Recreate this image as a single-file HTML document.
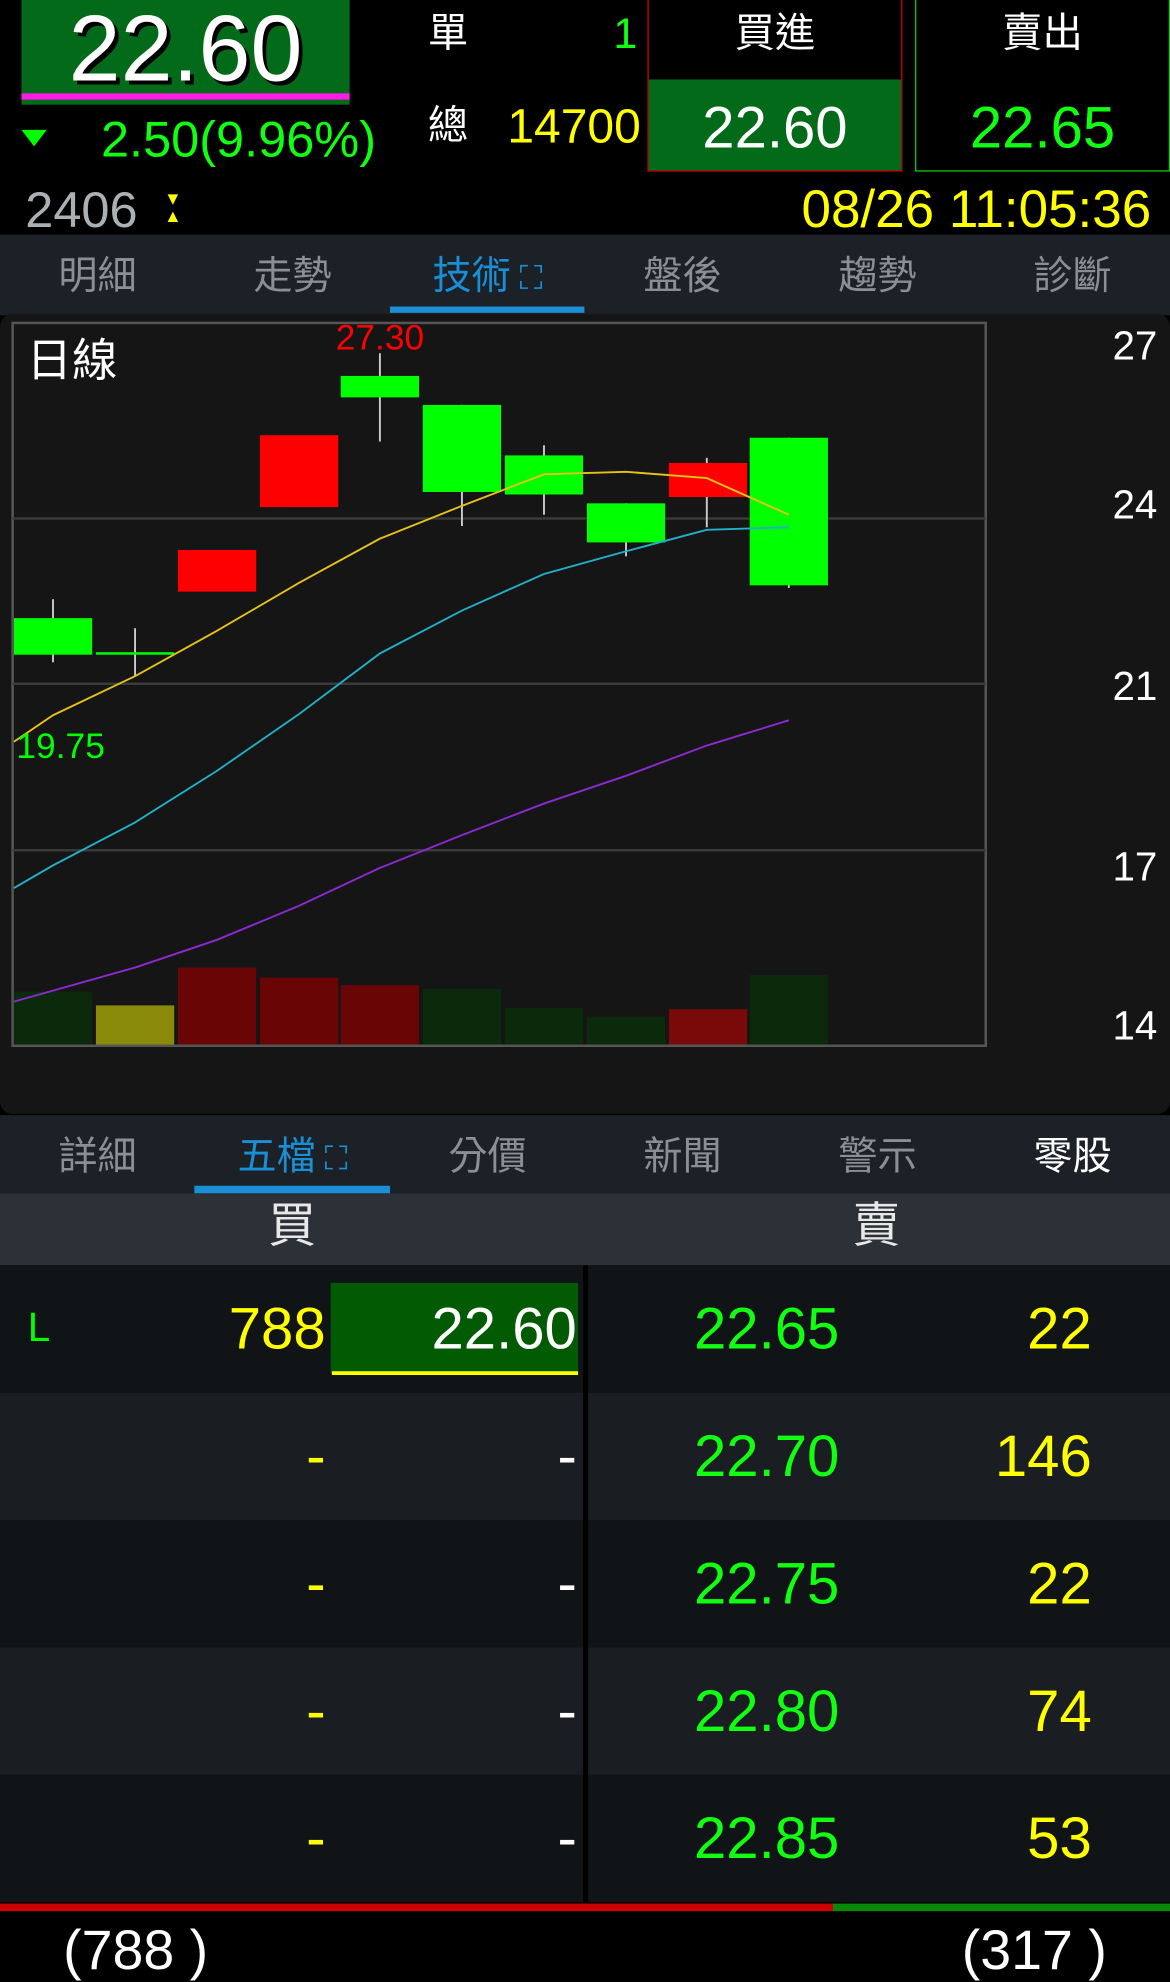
<!DOCTYPE html>
<html><head><meta charset="utf-8"><style>
html,body{margin:0;padding:0;background:#000;width:1170px;height:1978px;overflow:hidden}
#w{position:absolute;left:0;top:0;width:927px;height:1568px;transform:scale(1.26214,1.26148);transform-origin:0 0;font-family:"Liberation Sans Narrow","Liberation Sans","Noto Sans CJK TC",sans-serif}
.a{position:absolute;white-space:nowrap;line-height:1}
.cj{font-family:"Liberation Sans","Noto Sans CJK TC",sans-serif}
.tab{position:absolute;width:154.5px;text-align:center;font-size:31px;color:#8a8f94;font-family:"Noto Sans CJK TC",sans-serif;line-height:1}
.row{position:absolute;left:0;width:927px;height:101px}
.n{position:absolute;font-size:46px;line-height:1;text-align:right}
</style></head><body><div id="w">
<!-- top -->
<div class="a" style="left:17px;top:0;width:260px;height:83px;background:#036a1a"></div>
<div class="a" style="left:17px;top:74px;width:260px;height:5px;background:#ff1ae6"></div>
<div class="a" style="left:17px;top:2px;width:260px;text-align:center;font-size:74px;color:#fff;text-shadow:3px 3px 0 #000">22.60</div>
<div class="a" style="left:17px;top:103px;width:0;height:0;border-left:10px solid transparent;border-right:10px solid transparent;border-top:13px solid #0f0"></div>
<div class="a" style="left:80px;top:91px;font-size:40px;color:#1f1">2.50(9.96%)</div>
<div class="a cj" style="left:339px;top:10px;font-size:32px;color:#fff">單</div>
<div class="a" style="left:486px;top:10px;font-size:34px;color:#1f1">1</div>
<div class="a cj" style="left:339px;top:83px;font-size:32px;color:#fff">總</div>
<div class="a" style="left:402px;top:82px;font-size:38px;color:#ff0">14700</div>
<div class="a" style="left:513px;top:0;width:200px;height:135px;border:1px solid #d00;border-top:none"></div>
<div class="a" style="left:514px;top:63px;width:200px;height:72px;background:#036a1a"></div>
<div class="a cj" style="left:513px;top:10px;width:202px;text-align:center;font-size:32px;color:#fff">買進</div>
<div class="a" style="left:513px;top:78px;width:202px;text-align:center;font-size:46px;color:#fff">22.60</div>
<div class="a" style="left:725px;top:0;width:200px;height:135px;border:1px solid #1c1;border-top:none"></div>
<div class="a cj" style="left:725px;top:10px;width:202px;text-align:center;font-size:32px;color:#fff">賣出</div>
<div class="a" style="left:725px;top:78px;width:202px;text-align:center;font-size:46px;color:#1f1">22.65</div>
<div class="a" style="left:20px;top:147px;font-size:40px;color:#aab0b4">2406</div>
<div class="a" style="left:130px;top:150px;font-size:14px;color:#ff0;line-height:14px">▼<br>▲</div>
<div class="a" style="left:635px;top:145px;font-size:42px;color:#ff0">08/26 11:05:36</div>
<!-- tabs 1 -->
<div class="a" style="left:0;top:186px;width:927px;height:64px;background:#1b2126"></div>
<div class="tab" style="left:0;top:200px">明細</div>
<div class="tab" style="left:154.5px;top:200px">走勢</div>
<div class="tab" style="left:309px;top:200px;color:#1a8fd6">技術 <span style="font-size:26px">⛶</span></div>
<div class="tab" style="left:463.5px;top:200px">盤後</div>
<div class="tab" style="left:618px;top:200px">趨勢</div>
<div class="tab" style="left:772.5px;top:200px">診斷</div>
<div class="a" style="left:309px;top:243px;width:154px;height:5px;background:#1a8fd6"></div>
<!-- chart -->
<div class="a" style="left:0;top:249px;width:927px;height:634px;background:#151515;border-radius:10px"></div>
<svg class="a" style="left:0;top:0" width="927" height="900" viewBox="0 0 927 900">
<rect x="10" y="256" width="771" height="573" fill="none" stroke="#555" stroke-width="2"/>
<g stroke="#3a3a3a" stroke-width="2"><line x1="10" y1="411" x2="781" y2="411"/><line x1="10" y1="542" x2="781" y2="542"/><line x1="10" y1="674" x2="781" y2="674"/></g>
<g>
<rect x="11" y="786" width="62" height="42" fill="#0b2a0b"/>
<rect x="76" y="797" width="62" height="31" fill="#8a8a0a"/>
<rect x="141" y="767" width="62" height="61" fill="#6a0505"/>
<rect x="206" y="775" width="62" height="53" fill="#6a0505"/>
<rect x="270" y="781" width="62" height="47" fill="#6a0505"/>
<rect x="335" y="784" width="62" height="44" fill="#0b2a0b"/>
<rect x="400" y="799" width="62" height="29" fill="#0b2a0b"/>
<rect x="465" y="806" width="62" height="22" fill="#0b2a0b"/>
<rect x="530" y="800" width="62" height="28" fill="#7a0a0a"/>
<rect x="594" y="773" width="62" height="55" fill="#0b2a0b"/>
</g>
<g stroke="#ccc" stroke-width="1.5">
<line x1="42" y1="475" x2="42" y2="525"/><line x1="107" y1="498" x2="107" y2="536"/>
<line x1="301" y1="280" x2="301" y2="350"/><line x1="366" y1="321" x2="366" y2="417"/>
<line x1="431" y1="353" x2="431" y2="408"/><line x1="496" y1="399" x2="496" y2="441"/>
<line x1="560" y1="363" x2="560" y2="418"/><line x1="625" y1="347" x2="625" y2="466"/>
</g>
<g fill="#0f0">
<rect x="11" y="490" width="62" height="29"/><rect x="76" y="517" width="62" height="2"/>
<rect x="270" y="298" width="62" height="17"/><rect x="335" y="321" width="62" height="69"/>
<rect x="400" y="361" width="62" height="31"/><rect x="465" y="399" width="62" height="31"/>
<rect x="594" y="347" width="62" height="117"/>
</g>
<g fill="#f00"><rect x="141" y="436" width="62" height="33"/><rect x="206" y="345" width="62" height="57"/><rect x="530" y="367" width="62" height="27"/></g>
<polyline fill="none" stroke="#e6c21a" stroke-width="1.5" points="11,588 42,567 107,536 172,500 237,462 301,427 366,401 431,376 496,374 560,379 625,408"/>
<polyline fill="none" stroke="#22b0c8" stroke-width="1.5" points="11,704 42,686 107,652 172,611 237,566 301,518 366,484 431,455 496,437 560,420 625,418"/>
<polyline fill="none" stroke="#8a2ad0" stroke-width="1.5" points="11,794 107,767 172,745 237,718 301,688 366,662 431,637 496,615 560,591 625,571"/>
</svg>
<div class="a" style="left:266px;top:254px;font-size:28px;color:#f00">27.30</div>
<div class="a" style="left:13px;top:578px;font-size:28px;color:#0f0">19.75</div>
<div class="a cj" style="left:21px;top:268px;font-size:36px;color:#fff">日線</div>
<div class="a" style="left:860px;top:258px;width:57px;text-align:right;font-size:32px;color:#fff">27</div>
<div class="a" style="left:860px;top:384px;width:57px;text-align:right;font-size:32px;color:#fff">24</div>
<div class="a" style="left:860px;top:528px;width:57px;text-align:right;font-size:32px;color:#fff">21</div>
<div class="a" style="left:860px;top:671px;width:57px;text-align:right;font-size:32px;color:#fff">17</div>
<div class="a" style="left:860px;top:797px;width:57px;text-align:right;font-size:32px;color:#fff">14</div>
<!-- tabs 2 -->
<div class="a" style="left:0;top:884px;width:927px;height:62px;background:#1b2126"></div>
<div class="tab" style="left:0;top:898px">詳細</div>
<div class="tab" style="left:154.5px;top:898px;color:#1a8fd6">五檔 <span style="font-size:26px">⛶</span></div>
<div class="tab" style="left:309px;top:898px">分價</div>
<div class="tab" style="left:463.5px;top:898px">新聞</div>
<div class="tab" style="left:618px;top:898px">警示</div>
<div class="tab" style="left:772.5px;top:898px;color:#fff">零股</div>
<div class="a" style="left:154px;top:940px;width:155px;height:6px;background:#1a8fd6"></div>
<div class="a" style="left:0;top:946px;width:927px;height:57px;background:#2c3137"></div>
<div class="a cj" style="left:0;top:953px;width:463px;text-align:center;font-size:38px;color:#e8e8e8">買</div>
<div class="a cj" style="left:463px;top:953px;width:463px;text-align:center;font-size:38px;color:#e8e8e8">賣</div>
<!-- rows -->
<div class="row" style="top:1003px;background:#111417"></div>
<div class="row" style="top:1104px;background:#1a1e22"></div>
<div class="row" style="top:1205px;background:#111417"></div>
<div class="row" style="top:1306px;background:#1a1e22"></div>
<div class="row" style="top:1407px;background:#111417"></div>
<div class="a" style="left:462px;top:1003px;width:4px;height:505px;background:#000"></div>
<div class="a" style="left:262px;top:1017px;width:196px;height:72px;background:#025a02"></div>
<div class="a" style="left:263px;top:1087px;width:195px;height:3px;background:#ff0"></div>
<div class="a" style="left:22px;top:1036px;font-size:32px;color:#0f0">L</div>
<div class="n" style="left:150px;top:1030px;width:108px;color:#ff0">788</div>
<div class="n" style="left:262px;top:1030px;width:195px;color:#fff">22.60</div>
<div class="n" style="left:500px;top:1030px;width:165px;color:#1f1">22.65</div>
<div class="n" style="left:700px;top:1030px;width:165px;color:#ff0">22</div>
<div class="n" style="left:150px;top:1131px;width:108px;color:#ff0">-</div><div class="n" style="left:262px;top:1131px;width:195px;color:#fff">-</div>
<div class="n" style="left:500px;top:1131px;width:165px;color:#1f1">22.70</div><div class="n" style="left:700px;top:1131px;width:165px;color:#ff0">146</div>
<div class="n" style="left:150px;top:1232px;width:108px;color:#ff0">-</div><div class="n" style="left:262px;top:1232px;width:195px;color:#fff">-</div>
<div class="n" style="left:500px;top:1232px;width:165px;color:#1f1">22.75</div><div class="n" style="left:700px;top:1232px;width:165px;color:#ff0">22</div>
<div class="n" style="left:150px;top:1333px;width:108px;color:#ff0">-</div><div class="n" style="left:262px;top:1333px;width:195px;color:#fff">-</div>
<div class="n" style="left:500px;top:1333px;width:165px;color:#1f1">22.80</div><div class="n" style="left:700px;top:1333px;width:165px;color:#ff0">74</div>
<div class="n" style="left:150px;top:1434px;width:108px;color:#ff0">-</div><div class="n" style="left:262px;top:1434px;width:195px;color:#fff">-</div>
<div class="n" style="left:500px;top:1434px;width:165px;color:#1f1">22.85</div><div class="n" style="left:700px;top:1434px;width:165px;color:#ff0">53</div>
<!-- bottom -->
<div class="a" style="left:0;top:1509px;width:660px;height:6px;background:#c00"></div>
<div class="a" style="left:660px;top:1509px;width:267px;height:6px;background:#0a8a0a"></div>
<div class="a" style="left:50px;top:1525px;font-size:44px;color:#fff">(788 )</div>
<div class="a" style="left:762px;top:1525px;font-size:44px;color:#fff">(317 )</div>
</div></body></html>
